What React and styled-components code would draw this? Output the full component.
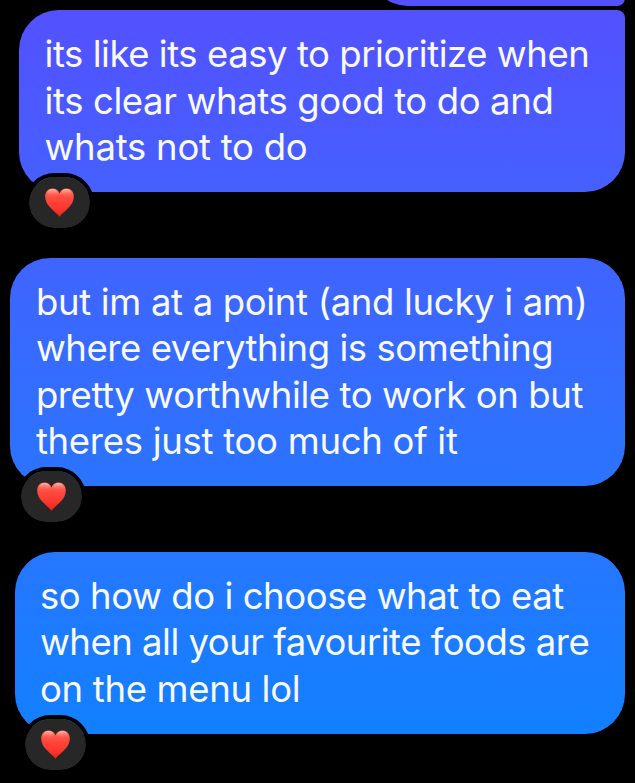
import React from "react";
import styled, { createGlobalStyle } from "styled-components";

const GlobalStyle = createGlobalStyle`
  * {
    box-sizing: border-box;
  }

  body {
    margin: 0;
    background: #000;
    font-family: Inter, "Liberation Sans", sans-serif;
  }
`;

const Thread = styled.main`
  display: flex;
  flex-direction: column;
  align-items: flex-end;
  width: 635px;
  height: 783px;
  padding-right: 10px;
  background: #000;
  overflow: hidden;
`;

const PreviousBubble = styled.div`
  width: 256px;
  height: 84px;
  margin-top: -78px;
  margin-bottom: 4px;
  flex-shrink: 0;
  border-radius: 39px 39px 8px 39px;
  background: #5450ff;
`;

const Bubble = styled.div`
  position: relative;
  flex-shrink: 0;
  width: ${({ $width }) => $width}px;
  margin-bottom: 65.8px;
  padding: 21px 0 21px 25.5px;
  border-radius: ${({ $grouped }) => ($grouped ? "40px 8px 40px 40px" : "40px")};
  background: linear-gradient(${({ $from, $to }) => `${$from}, ${$to}`});
`;

const Line = styled.span`
  display: block;
  width: max-content;
  color: #f8faff;
  font-size: 36.5px;
  line-height: 46.6px;
  letter-spacing: ${({ $spacing }) => $spacing}px;
  white-space: nowrap;
`;

const Reaction = styled.div`
  position: absolute;
  left: 6.4px;
  bottom: -40px;
  display: flex;
  align-items: center;
  justify-content: center;
  width: 69px;
  height: 59px;
  border: 4px solid #000;
  border-radius: 30px;
  background: #272727;
  background-clip: padding-box;
`;

const HeartIcon = styled.svg`
  width: 29px;
  height: 29px;
`;

const messages = [
  {
    width: 606,
    grouped: true,
    from: "#5351ff",
    to: "#4560ff",
    lines: [
      ["its like its easy to prioritize when", -0.45],
      ["its clear whats good to do and", -0.38],
      ["whats not to do", -0.25],
    ],
  },
  {
    width: 614.6,
    from: "#4064ff",
    to: "#2a74ff",
    lines: [
      ["but im at a point (and lucky i am)", -0.32],
      ["where everything is something", -0.44],
      ["pretty worthwhile to work on but", -0.4],
      ["theres just too much of it", -0.28],
    ],
  },
  {
    width: 610.5,
    from: "#2677ff",
    to: "#1280ff",
    lines: [
      ["so how do i choose what to eat", -0.44],
      ["when all your favourite foods are", -0.5],
      ["on the menu lol", -0.32],
    ],
  },
];

const Heart = ({ id }) => (
  <HeartIcon viewBox="0 0 29 29">
    <defs>
      <linearGradient id={`body-${id}`} x1="0" y1="0" x2="0" y2="1">
        <stop offset="0" stopColor="#ff7464" />
        <stop offset="0.35" stopColor="#ff4a3e" />
        <stop offset="0.75" stopColor="#fb342b" />
        <stop offset="1" stopColor="#e8241c" />
      </linearGradient>
      <linearGradient id={`shine-${id}`} x1="0" y1="0" x2="0" y2="1">
        <stop offset="0" stopColor="#ffc0b6" stopOpacity="0.9" />
        <stop offset="1" stopColor="#ff6a5c" stopOpacity="0" />
      </linearGradient>
    </defs>
    <path
      d="M14.5 28.7C13.2 26.8 9.500 24 5.500 19.800C2.100 16.200 0.200 12.600 0.200 8.400C0.200 3.700 3.300 0.500 7.400 0.500C10.700 0.500 13.400 2.200 14.500 5.200C15.600 2.200 18.300 0.500 21.600 0.500C25.700 0.500 28.800 3.700 28.800 8.400C28.800 12.600 26.900 16.200 23.500 19.800C19.500 24 15.800 26.800 14.500 28.700Z"
      fill={`url(#body-${id})`}
    />
    <ellipse cx="7.600" cy="4.600" rx="5.200" ry="3.500" fill={`url(#shine-${id})`} />
    <ellipse cx="21.400" cy="4.600" rx="5.200" ry="3.500" fill={`url(#shine-${id})`} />
  </HeartIcon>
);

const App = () => {
  return (
    <>
      <GlobalStyle />
      <Thread>
        <PreviousBubble />
        {messages.map((message, index) => (
          <Bubble
            key={index}
            $width={message.width}
            $grouped={message.grouped}
            $from={message.from}
            $to={message.to}
          >
            {message.lines.map(([text, spacing]) => (
              <Line key={text} $spacing={spacing}>
                {text}
              </Line>
            ))}
            <Reaction>
              <Heart id={index} />
            </Reaction>
          </Bubble>
        ))}
      </Thread>
    </>
  );
};

export default App;
